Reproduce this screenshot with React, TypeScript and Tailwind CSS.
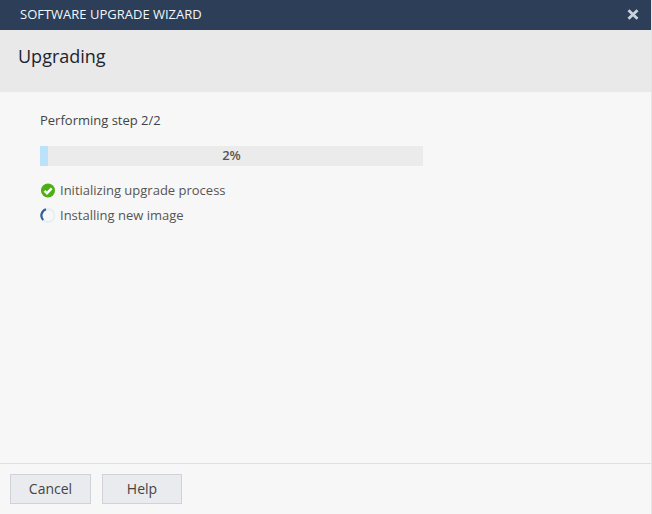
export default function App() {
  return (
    <div className="w-[652px] h-[514px] flex flex-col bg-[#f7f7f7] font-['Open_Sans',sans-serif] overflow-hidden border-r border-[#e4e4e4]">
      <div className="h-[30px] shrink-0 bg-[#2d3e58] flex items-center justify-between pl-5 pr-3">
        <span className="text-[13px] text-[#f2f7fb]">SOFTWARE UPGRADE WIZARD</span>
        <svg width="12" height="11" viewBox="0 0 12 11" className="text-[#c9d2de] -translate-y-px">
          <path d="M1.5 1.2 L10.5 9.8 M10.5 1.2 L1.5 9.8" stroke="currentColor" strokeWidth="2.8" />
        </svg>
      </div>
      <div className="h-[62px] shrink-0 bg-[#e9e9e9] flex items-center pl-[18px] pb-[9px]">
        <h1 className="text-[18px] text-[#1c2430]">Upgrading</h1>
      </div>
      <div className="flex-1 pl-10 pt-[19px]">
        <p className="text-[13px] leading-[18px] text-[#444]">Performing step 2/2</p>
        <div className="relative mt-[17px] w-[383px] h-5 bg-[#ebebeb]">
          <div className="h-full w-2 bg-[#bbe1fb]" />
          <span className="absolute inset-0 flex items-center justify-center text-[13px] font-semibold text-[#555]">2%</span>
        </div>
        <div className="mt-4 flex items-center gap-[5px] h-[18px]">
          <svg width="15" height="15" viewBox="0 0 15 15" className="translate-x-px -translate-y-px">
            <circle cx="7" cy="7.5" r="7" fill="#4caf14" />
            <path d="M3.5 7.8 L6 10.2 L10.7 5.3" fill="none" stroke="#fff" strokeWidth="2.4" />
          </svg>
          <span className="text-[13px] text-[#555]">Initializing upgrade process</span>
        </div>
        <div className="mt-[7px] flex items-center gap-[5px] h-[18px]">
          <svg width="15" height="15" viewBox="0 0 15 15" className="-translate-y-px">
            <circle cx="8" cy="7.5" r="6.5" fill="none" stroke="#e6edf4" strokeWidth="1.8" />
            <path d="M6 1.3 A6.5 6.5 0 0 0 3.2 12" fill="none" stroke="#2f5f9a" strokeWidth="2.2" />
          </svg>
          <span className="text-[13px] text-[#555]">Installing new image</span>
        </div>
      </div>
      <div className="h-[51px] shrink-0 border-t border-[#dfdfdf] flex gap-[11px] pl-[10px] pt-[10px]">
        <button className="w-[81px] h-[30px] border border-[#cfd3d8] bg-[#e9ebee] pb-[2px] text-[14px] text-[#444]">Cancel</button>
        <button className="w-[80px] h-[30px] border border-[#cfd3d8] bg-[#e9ebee] pb-[2px] text-[14px] text-[#444]">Help</button>
      </div>
    </div>
  );
}
